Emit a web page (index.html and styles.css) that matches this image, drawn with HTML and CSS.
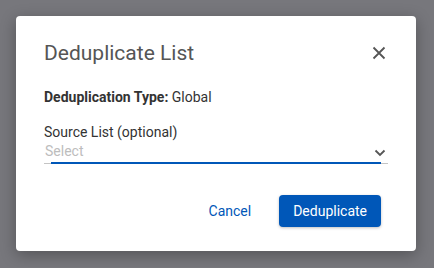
FILE: index.html
```html
<!DOCTYPE html>
<html lang="en">
<head>
  <meta charset="UTF-8">
  <title>Deduplicate List</title>
  <link rel="stylesheet" href="styles.css">
</head>
<body>
  <div class="dialog">
    <div class="dialog-header">
      <h2>Deduplicate List</h2>
      <button class="close" aria-label="Close">
        <svg width="14" height="14" viewBox="0 0 14 14">
          <path d="M1.5 1.5 L12.5 12.5 M12.5 1.5 L1.5 12.5" stroke="#555" stroke-width="1.8" fill="none"/>
        </svg>
      </button>
    </div>

    <p class="type-line"><strong>Deduplication Type:</strong> Global</p>

    <label class="field-label">Source List (optional)</label>
    <div class="select">
      <span class="placeholder">Select</span>
      <svg class="chevron" width="12" height="8" viewBox="0 0 12 8">
        <path d="M1.5 1.5 L6 6 L10.5 1.5" stroke="#555" stroke-width="1.8" fill="none"/>
      </svg>
    </div>

    <div class="actions">
      <button class="btn-text">Cancel</button>
      <button class="btn-primary">Deduplicate</button>
    </div>
  </div>
</body>
</html>
```

FILE: styles.css
```css
body {
  margin: 0;
  padding: 16px;
  background: #77777c;
  font-family: Roboto, 'Liberation Sans', sans-serif;
}

.dialog {
  width: 400px;
  height: 235px;
  box-sizing: border-box;
  background: white;
  border-radius: 4px;
  padding: 23px 28px 24px 28px;
  box-shadow: 0 4px 16px rgba(0,0,0,0.3);
}

.dialog-header {
  display: flex;
  justify-content: space-between;
  align-items: center;
  height: 28px;
}

h2 {
  margin: 0;
  font-size: 21px;
  font-weight: 400;
  line-height: 28px;
  color: #555;
}

.close {
  background: none;
  border: none;
  padding: 0;
  width: 18px;
  height: 18px;
  display: flex;
  align-items: center;
  justify-content: center;
  cursor: pointer;
}

.type-line {
  margin: 20px 0 0 0;
  font-size: 14px;
  line-height: 20px;
  color: #333;
}

.field-label {
  display: block;
  margin-top: 15px;
  font-size: 14px;
  line-height: 20px;
  color: #333;
}

.select {
  position: relative;
  display: flex;
  justify-content: space-between;
  align-items: flex-start;
  height: 21px;
  border-bottom: 1px solid #c4c4c4;
}

.select::after {
  content: "";
  position: absolute;
  left: 7px;
  right: 7px;
  bottom: -1px;
  height: 2px;
  background: #0057b8;
}

.placeholder {
  font-size: 14px;
  line-height: 18px;
  color: #bdbdbd;
  padding-left: 1px;
}

.chevron {
  margin-right: 2px;
  margin-top: 7px;
}

.actions {
  display: flex;
  justify-content: flex-end;
  align-items: center;
  gap: 12px;
  margin-top: 31px;
  padding-right: 7px;
}

.btn-text {
  background: none;
  border: none;
  font-family: inherit;
  font-size: 14px;
  color: #0057b8;
  padding: 0 16px;
  height: 32px;
  cursor: pointer;
}

.btn-primary {
  background: #0057b8;
  color: white;
  border: none;
  border-radius: 4px;
  font-family: inherit;
  font-size: 14px;
  height: 32px;
  padding: 0 14px;
  box-shadow: 0 1px 3px rgba(0,0,0,0.25);
  cursor: pointer;
}
```
